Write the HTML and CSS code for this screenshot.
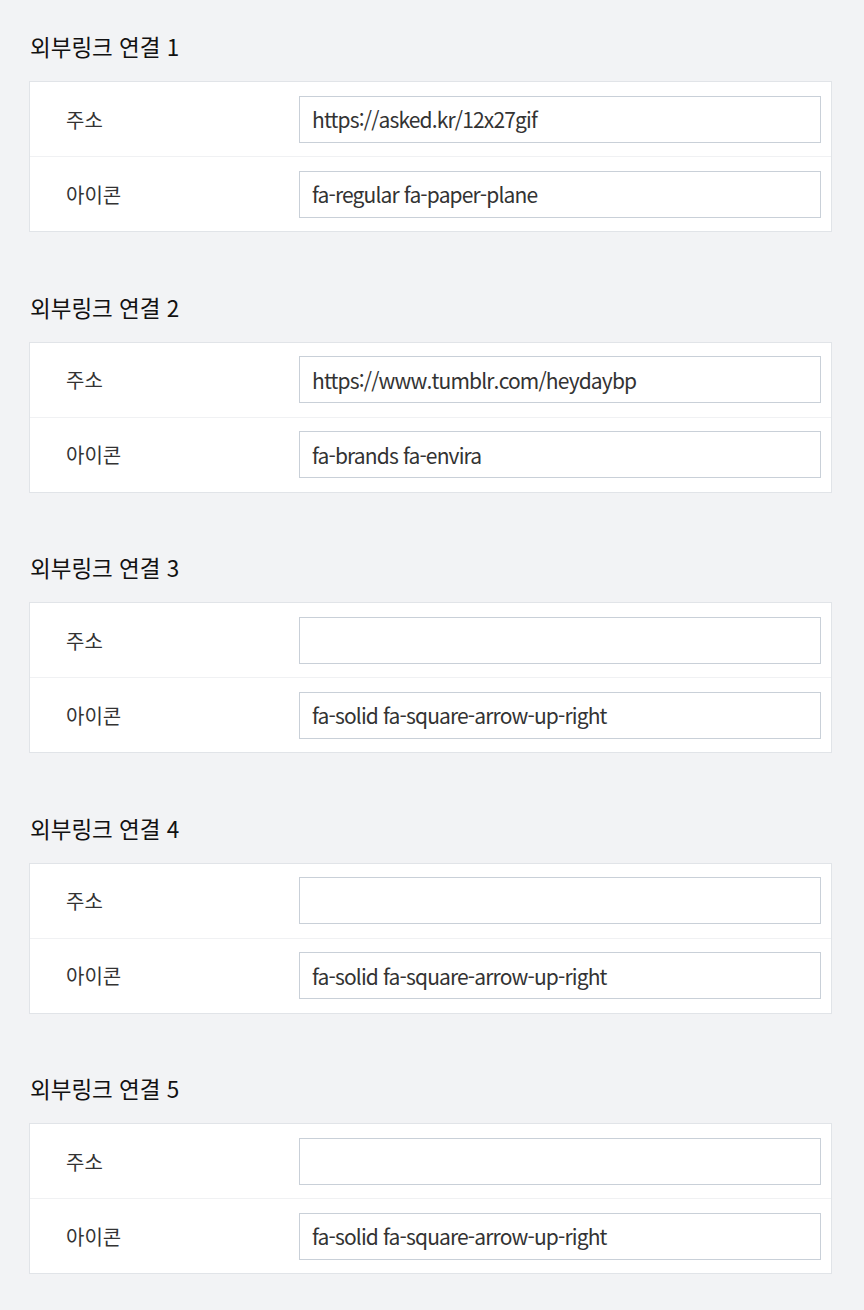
FILE: index.html
```html
<!DOCTYPE html>
<html lang="ko">
<head>
    <meta charset="UTF-8">
    <meta name="viewport" content="width=device-width, initial-scale=1.0">
    <link rel="stylesheet" href="styles.css">
    <title>외부링크 설정</title>
</head>
<body>
    <div class="page">
        <div class="section">
            <h2>외부링크 연결 1</h2>
            <div class="box">
                <div class="row">
                    <label>주소</label>
                    <input type="text" value="https://asked.kr/12x27gif">
                </div>
                <div class="row">
                    <label>아이콘</label>
                    <input type="text" value="fa-regular fa-paper-plane">
                </div>
            </div>
        </div>

        <div class="section">
            <h2>외부링크 연결 2</h2>
            <div class="box">
                <div class="row">
                    <label>주소</label>
                    <input type="text" value="https://www.tumblr.com/heydaybp">
                </div>
                <div class="row">
                    <label>아이콘</label>
                    <input type="text" value="fa-brands fa-envira">
                </div>
            </div>
        </div>

        <div class="section">
            <h2>외부링크 연결 3</h2>
            <div class="box">
                <div class="row">
                    <label>주소</label>
                    <input type="text" value="">
                </div>
                <div class="row">
                    <label>아이콘</label>
                    <input type="text" value="fa-solid fa-square-arrow-up-right">
                </div>
            </div>
        </div>

        <div class="section">
            <h2>외부링크 연결 4</h2>
            <div class="box">
                <div class="row">
                    <label>주소</label>
                    <input type="text" value="">
                </div>
                <div class="row">
                    <label>아이콘</label>
                    <input type="text" value="fa-solid fa-square-arrow-up-right">
                </div>
            </div>
        </div>

        <div class="section">
            <h2>외부링크 연결 5</h2>
            <div class="box">
                <div class="row">
                    <label>주소</label>
                    <input type="text" value="">
                </div>
                <div class="row">
                    <label>아이콘</label>
                    <input type="text" value="fa-solid fa-square-arrow-up-right">
                </div>
            </div>
        </div>
    </div>
</body>
</html>
```

FILE: styles.css
```css
body {
    font-family: "Noto Sans CJK KR", "Noto Sans", sans-serif;
    background-color: #f2f3f5;
    margin: 0;
    padding: 0;
}

.page {
    display: flex;
    flex-direction: column;
    gap: 59.5px;
    padding: 31px 32px 40px 29px;
}

h2 {
    font-size: 22.5px;
    font-weight: 400;
    line-height: 30px;
    color: #111;
    margin: 0 0 20px 1px;
}

.box {
    background-color: #fff;
    border: 1px solid #e1e4e8;
}

.row {
    display: grid;
    grid-template-columns: 269px 1fr;
    align-items: center;
    height: 74px;
    padding-right: 10px;
}

.row + .row {
    border-top: 1px solid #f0f1f3;
}

label {
    font-size: 20px;
    color: #333;
    padding-left: 36px;
}

input {
    font-family: inherit;
    font-size: 21px;
    letter-spacing: -0.85px;
    color: #333;
    height: 47px;
    box-sizing: border-box;
    border: 1px solid #c9d0d8;
    border-radius: 0;
    padding: 0 12px;
    outline: none;
    background-color: #fff;
}
```
